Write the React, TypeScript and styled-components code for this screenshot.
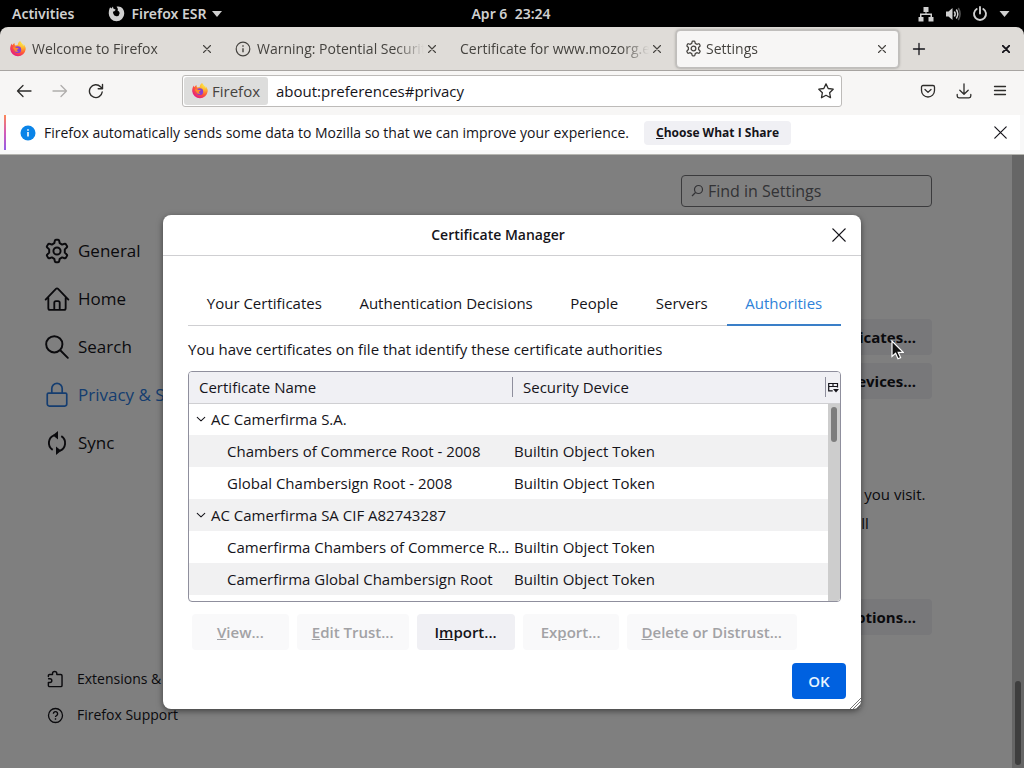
import React from "react";
import styled, { createGlobalStyle, css } from "styled-components";

const GlobalStyle = createGlobalStyle`
  *, *::before, *::after { box-sizing: border-box; }
  body { margin: 0; background: #ffffff; }
  body, button, input { font-family: "Open Sans", "Noto Sans", sans-serif; }
  button { border: 0; padding: 0; background: none; color: inherit; font-size: 15px; line-height: 20px; }
  svg { display: block; flex: none; }
`;

const Screen = styled.div`
  display: flex;
  flex-direction: column;
  height: 100vh;
  background: #000000;
  color: #15141a;
  font-size: 15px;
  line-height: 20px;
  overflow: hidden;
`;

/* Desktop top bar */
const TopBar = styled.header`
  display: grid;
  grid-template-columns: 1fr auto 1fr;
  align-items: center;
  height: 27px;
  flex: none;
  padding: 0 14px 0 12px;
  color: #d0d0d0;
  font-family: "Noto Sans", sans-serif;
  font-size: 14px;
  font-weight: 600;
`;
const TopGroup = styled.div<{ $end?: boolean }>`
  display: flex;
  align-items: center;
  gap: ${(p) => (p.$end ? 11 : 34)}px;
  justify-content: ${(p) => (p.$end ? "flex-end" : "flex-start")};
`;
const TopButton = styled.button`
  display: flex;
  align-items: center;
  gap: 6px;
  font-family: inherit;
  font-size: 14px;
  font-weight: 600;
`;
const Clock = styled.time`
  white-space: pre;
`;

/* Browser tabs */
const TabStrip = styled.div`
  display: flex;
  align-items: center;
  height: 44px;
  flex: none;
  background: #dfdcd8;
  border-bottom: 1px solid #a8a5a2;
  border-radius: 8px 8px 0 0;
`;
const BrowserTab = styled.div<{ $active?: boolean }>`
  display: flex;
  align-items: center;
  gap: 6px;
  flex: 0 1 225px;
  min-width: 0;
  height: 38px;
  padding: 0 10px;
  color: #45433f;
  font-size: 14px;
  ${(p) =>
    p.$active &&
    css`
      flex-basis: 223px;
      gap: 4px;
      margin-left: 1px;
      padding: 0 8px;
      background: #f7f6f5;
      border: 1px solid #c0bebc;
      border-radius: 4px;
      box-shadow: 0 0 3px rgba(0, 0, 0, 0.35);
    `}
`;
const TabLabel = styled.span`
  flex: 1;
  min-width: 0;
  overflow: hidden;
  white-space: nowrap;
  mask-image: linear-gradient(to left, transparent, #000 28px);
`;
const IconButton = styled.button<{ $w?: number }>`
  display: flex;
  align-items: center;
  justify-content: center;
  width: ${(p) => p.$w ?? 36}px;
  height: 32px;
  flex: none;
  &:disabled { color: #b0aeac; }
`;
const TabClose = styled(IconButton)`
  margin-left: -6px;
`;
const Spacer = styled.div`
  flex: 1;
`;

/* Navigation toolbar */
const Toolbar = styled.div`
  display: grid;
  grid-template-columns: 176px 1fr 176px;
  align-items: center;
  height: 44px;
  padding: 0 6px 4px;
  flex: none;
  background: #f7f6f5;
  color: #2e2d2b;
`;
const ToolGroup = styled.div<{ $end?: boolean }>`
  display: flex;
  justify-content: ${(p) => (p.$end ? "flex-end" : "flex-start")};
`;
const UrlBar = styled.div`
  display: flex;
  align-items: center;
  height: 32px;
  padding: 0 0 0 1px;
  background: #ffffff;
  border: 1px solid #bdbbb9;
  border-radius: 3px;
`;
const Identity = styled.button`
  display: flex;
  align-items: center;
  gap: 4px;
  height: 28px;
  padding: 0 8px;
  flex: none;
  background: #dddddc;
  border-radius: 3px;
  color: #45433f;
`;
const UrlInput = styled.input`
  flex: 1;
  min-width: 0;
  border: 0;
  padding: 0 8px;
  background: transparent;
  color: #15141a;
  font-size: 15px;
  outline: 0;
`;

/* Data notice under the toolbar */
const NoticeWrap = styled.div`
  height: 40px;
  padding: 0 4px 4px;
  flex: none;
  background: #f8f8f8;
  border-bottom: 1px solid #b5b5b0;
`;
const Notice = styled.div`
  display: flex;
  align-items: center;
  height: 35px;
  background: #ffffff;
  border-left: 2px solid;
  border-image: linear-gradient(#ff8a50, #d35bb8, #8f5ce8) 1;
  padding: 0 2px 0 14px;
  font-size: 14px;
  white-space: nowrap;
`;
const NoticeText = styled.span`
  margin: 0 15px 0 8px;
`;
const NoticeButton = styled.button`
  height: 24px;
  padding: 0 12px;
  border-radius: 4px;
  background: #f0f0f4;
  font-size: 12px;
  font-weight: 700;
`;

/* Settings page */
const Page = styled.div`
  position: relative;
  flex: 1;
  min-height: 0;
  display: flex;
  background: #ffffff;
`;
const Sidebar = styled.nav`
  display: flex;
  flex-direction: column;
  width: 240px;
  flex: none;
  padding: 72px 0 35px 44px;
`;
const NavLink = styled.a<{ $active?: boolean }>`
  display: flex;
  align-items: center;
  gap: 8px;
  height: 48px;
  color: ${(p) => (p.$active ? "#2a7be0" : "#15141a")};
  font-size: 17px;
  line-height: 24px;
  text-decoration: none;
  white-space: nowrap;
`;
const FootLink = styled(NavLink)`
  gap: 12px;
  height: 36px;
  padding-left: 2px;
  font-size: 14px;
`;
const Main = styled.main`
  display: flex;
  flex-direction: column;
  align-items: flex-end;
  flex: 1;
  min-width: 0;
  padding: 20px 80px 0 33px;
`;
const SearchField = styled.label`
  display: flex;
  align-items: center;
  gap: 4px;
  width: 251px;
  height: 32px;
  padding: 0 8px;
  border: 1px solid #76767a;
  border-radius: 4px;
  color: #66666c;
`;
const SearchInput = styled.input`
  flex: 1;
  min-width: 0;
  border: 0;
  padding: 0;
  background: transparent;
  font-size: 16px;
  outline: 0;
  &::placeholder { color: #66666c; opacity: 1; }
`;
const DeviceButtons = styled.div`
  display: flex;
  flex-direction: column;
  gap: 8px;
  margin-top: 112px;
`;
const PageButton = styled.button`
  height: 36px;
  min-width: 160px;
  padding: 0 16px;
  border-radius: 4px;
  background: #f0f0f4;
  font-weight: 700;
  text-align: right;
`;
const HttpsText = styled.p`
  margin: 81px 4px 0 0;
  width: 638px;
  line-height: 29px;
`;
const ExceptionsRow = styled.div`
  margin-top: 32px;
`;
const PageScroll = styled.div`
  display: flex;
  align-items: flex-end;
  justify-content: center;
  width: 12px;
  flex: none;
  padding-bottom: 3px;
  background: #cccccc;
`;
const PageThumb = styled.div`
  width: 6px;
  height: 84px;
  border-radius: 3px;
  background: #7c7c7c;
`;

/* Dialog */
const Overlay = styled.div`
  position: absolute;
  inset: 0;
  display: flex;
  align-items: center;
  justify-content: center;
  padding-top: 1px;
  background: rgba(0, 0, 0, 0.5);
`;
const Dialog = styled.section`
  position: relative;
  width: 698px;
  max-width: 100%;
  background: #ffffff;
  border-radius: 8px;
  box-shadow: 0 2px 6px rgba(0, 0, 0, 0.5);
`;
const DialogHead = styled.header`
  display: grid;
  grid-template-columns: 1fr 36px;
  align-items: center;
  height: 41px;
  padding: 0 4px 0 12px;
  border-bottom: 1px solid #cfcfd2;
`;
const DialogTitle = styled.h1`
  margin: 0;
  font-size: 14px;
  line-height: 20px;
  font-weight: 600;
  text-align: center;
`;
const DialogBody = styled.div`
  padding: 26px 20px 0 25px;
`;
const CertTabs = styled.div`
  display: flex;
  border-bottom: 1px solid #cfcfd2;
`;
const CertTab = styled.button<{ $active?: boolean }>`
  flex: 1 1 auto;
  height: 44px;
  margin-bottom: -1px;
  padding: 0 17px;
  border-bottom: 2px solid ${(p) => (p.$active ? "#3a7fc8" : "transparent")};
  color: ${(p) => (p.$active ? "#2f82d8" : "#15141a")};
  white-space: nowrap;
`;
const Intro = styled.p`
  margin: 13px 0 12px;
`;
const TableFrame = styled.div`
  border: 1px solid #8f8f9d;
  border-radius: 4px;
  overflow: hidden;
`;
const CertArea = styled.div`
  width: 653px;
  max-width: 100%;
`;
const Table = styled.table`
  width: 100%;
  table-layout: fixed;
  border-collapse: collapse;
`;
const Head = styled.th<{ $w?: number }>`
  width: ${(p) => (p.$w ? `${p.$w}px` : "auto")};
  height: 31px;
  padding: 0;
  background: #f0f0f4;
  border-bottom: 1px solid #cfcfd2;
  font-weight: 400;
  text-align: left;
`;
const HeadLabel = styled.div<{ $divided?: boolean }>`
  height: 20px;
  margin-right: ${(p) => (p.$divided ? 2 : 0)}px;
  padding-left: 10px;
  border: solid #8f8f9d;
  border-width: ${(p) => (p.$divided ? "0 1px" : "0")};
`;
const PickerButton = styled.button`
  display: flex;
  align-items: center;
  height: 20px;
`;
const Row = styled.tr<{ $shade?: boolean }>`
  height: 32px;
  background: ${(p) => (p.$shade ? "#f1f1f2" : "#ffffff")};
`;
const Filler = styled.tr`
  height: 6px;
`;
const Cell = styled.td<{ $left: number }>`
  padding: 0 0 0 ${(p) => p.$left}px;
  overflow: hidden;
  white-space: nowrap;
  text-overflow: ellipsis;
`;
const Group = styled.div`
  display: flex;
  align-items: center;
  gap: 5px;
`;
const TrackCell = styled.td`
  padding: 3px 3px 0;
  vertical-align: top;
  background: #cdcdcd;
`;
const Thumb = styled.div`
  width: 6px;
  height: 35px;
  border-radius: 3px;
  background: #7d7d7d;
`;
const Actions = styled.div`
  display: flex;
  gap: 8px;
  padding: 12px 4px 0;
`;
const Action = styled.button<{ $pad?: number }>`
  height: 36px;
  padding: 0 ${(p) => p.$pad ?? 15}px;
  border-radius: 4px;
  background: #f0f0f4;
  color: #15141a;
  font-weight: 600;
  white-space: nowrap;
  &:disabled { background: #f9f9fa; color: #a2a2a5; }
`;
const DialogFoot = styled.footer`
  display: flex;
  justify-content: flex-end;
  padding: 13px 15px 10px;
`;
const OkButton = styled.button`
  width: 54px;
  height: 36px;
  border-radius: 4px;
  background: #0061e0;
  color: #e8f4ff;
  font-weight: 600;
`;
const Grip = styled.div`
  position: absolute;
  right: 0;
  bottom: 0;
`;
const Pointer = styled.div`
  position: absolute;
  left: 891px;
  top: 185px;
`;

const Stroke = ({ d, size = 16, w = 1.3, box = 16 }: { d: string; size?: number; w?: number; box?: number }) => (
  <svg width={size} height={size} viewBox={`0 0 ${box} ${box}`} fill="none" stroke="currentColor" strokeWidth={w} strokeLinecap="round" strokeLinejoin="round" aria-hidden="true">
    <path d={d} />
  </svg>
);

const CloseIcon = ({ size = 8, w = 1.2 }: { size?: number; w?: number }) => (
  <Stroke d="M1 1 L15 15 M15 1 L1 15" size={size} w={(w * 16) / size} />
);

const GearIcon = ({ size }: { size: number }) => (
  <svg width={size} height={size} viewBox="0 0 24 24" fill="none" stroke="currentColor" strokeWidth="1.8" strokeLinejoin="round" aria-hidden="true">
    <path d="M11 1.700h2a1 1 0 0 1 1 .8l.5 2.300 2.200 1.300 2.300-.8a1 1 0 0 1 1.200.4l1 1.800a1 1 0 0 1-.2 1.300L19.200 10.500v3l1.800 1.700a1 1 0 0 1 .2 1.300l-1 1.800a1 1 0 0 1-1.200.4l-2.300-.8-2.200 1.300-.5 2.300a1 1 0 0 1-1 .8h-2a1 1 0 0 1-1-.8l-.5-2.300-2.200-1.300-2.300.8a1 1 0 0 1-1.200-.4l-1-1.800a1 1 0 0 1 .2-1.300L4.800 13.500v-3L3 8.800a1 1 0 0 1-.2-1.300l1-1.800A1 1 0 0 1 5 5.300l2.300.8 2.200-1.300.5-2.300a1 1 0 0 1 1-.8z" />
    <circle cx="12" cy="12" r="3.300" />
  </svg>
);

const FirefoxIcon = () => (
  <svg width="16" height="16" viewBox="0 0 16 16" aria-hidden="true">
    <defs>
      <radialGradient id="flame" cx="0.8" cy="0.12" r="1">
        <stop offset="0" stopColor="#fff04a" />
        <stop offset="0.35" stopColor="#ffb02e" />
        <stop offset="0.65" stopColor="#ff5a36" />
        <stop offset="1" stopColor="#e31587" />
      </radialGradient>
    </defs>
    <path fill="url(#flame)" d="M15.1 5.4c-.4-.9-1.1-1.8-1.7-2.1.5.9.7 1.7.8 2.4C13.300 3.400 11.700 2.500 10.400.500 10.300.300 10.200.100 10.200 0 8.500 1 7.800 2.700 7.700 3.900c-1 0-1.600.3-2.300.7C4.700 4.300 4.500 3 4.500 2.100 3.500 2.700 2.800 3.500 2.300 4.200 1.900 3.900 2 2.800 2 2.600.9 3.400.100 6 .200 8.300a7.800 7.800 0 0 0 15.500 0c.1-1-.1-2.100-.6-2.900z" />
    <circle cx="7.8" cy="8.7" r="3.400" fill="#8a3fd0" />
    <path fill="#ff8a2b" d="M3 6.600c1.400-.8 2.900-.4 3.600.3.700 0 2 .1 2 .5-.1.700-1.200.9-1.700 1.400-.3.700.4 1.500 1.500 1.500-1.600 1.200-3.900.3-4.100-1.500C3.800 8 3 7.500 3 6.600z" />
  </svg>
);

const Key = ({ text }: { text: string }) => {
  const [before, key, after] = text.split("|");
  return (
    <>
      {before}
      <u>{key}</u>
      {after}
    </>
  );
};

const nav = [
  { label: "General", icon: <GearIcon size={26} /> },
  { label: "Home", icon: <Stroke box={24} size={26} w={1.7} d="M1.500 12.500 L11 2.600 a1.400 1.400 0 0 1 2 0 L22.500 12.500 M4 10.500V20.500a1.500 1.500 0 0 0 1.500 1.500h13a1.500 1.500 0 0 0 1.500-1.500V10.500M9.500 22v-6.500a1.500 1.500 0 0 1 1.500-1.500h2a1.500 1.500 0 0 1 1.500 1.500V22" /> },
  { label: "Search", icon: <Stroke box={24} size={26} w={1.8} d="M9.500 2a7.500 7.500 0 1 0 0 15a7.500 7.500 0 0 0 0-15zM15 15l7 7" /> },
  { label: "Privacy & Security", icon: <Stroke box={20} size={26} w={1.3} d="M3.500 8.500h13a1 1 0 0 1 1 1v7.500a1.500 1.500 0 0 1-1.500 1.500H4a1.500 1.500 0 0 1-1.500-1.500V9.500a1 1 0 0 1 1-1zM6 8.500V5a4 4 0 0 1 8 0v3.500" />, active: true },
  {
    label: "Sync",
    icon: (
      <svg width="26" height="26" viewBox="0 0 26 26" fill="none" stroke="currentColor" strokeWidth="1.9" aria-hidden="true">
        <path d="M10.500 5.200a8.200 8.200 0 0 0-1.800 14.700M15.500 20.800a8.200 8.200 0 0 0 1.800-14.700" />
        <path d="M14 1v8.500L8.800 5.200zM12 25v-8.500l5.200 4.300z" fill="currentColor" stroke="none" />
      </svg>
    ),
  },
];

const rows = [
  { name: "AC Camerfirma S.A.", group: true },
  { name: "Chambers of Commerce Root - 2008" },
  { name: "Global Chambersign Root - 2008" },
  { name: "AC Camerfirma SA CIF A82743287", group: true },
  { name: "Camerfirma Chambers of Commerce Root" },
  { name: "Camerfirma Global Chambersign Root" },
];

const certTabs = ["Your Certificates", "Authentication Decisions", "People", "Servers", "Authorities"];

const actions = [
  { text: "|V|iew...", pad: 25 },
  { text: "|E|dit Trust..." },
  { text: "I|m|port...", enabled: true, pad: 18 },
  { text: "Ex|p|ort...", pad: 18 },
  { text: "|D|elete or Distrust..." },
];

const ShellBar = () => (
  <TopBar>
    <TopGroup>
      <TopButton>Activities</TopButton>
      <TopButton>
        <svg width="17" height="17" viewBox="0 0 16 16" aria-hidden="true">
          <path fill="#d0d0d0" d="M2 2.200 3.200 3.300 4.700 1.300 5 3.400 7.300 4.400 6 5.800 4.600 6.300 5 8.300A3 3 0 0 0 10.900 8C10.900 6.400 10 5.600 9 5.200 9.600 4.200 9.300 2.800 8 1.600 12.500.500 15.300 4 15.300 8A7.300 7.300 0 0 1 .7 8C.700 5.800 1.200 3.600 2 2.200z" />
        </svg>
        Firefox ESR
        <svg width="10" height="6" viewBox="0 0 10 6" aria-hidden="true"><path d="M0 0h10L5 6z" fill="currentColor" /></svg>
      </TopButton>
    </TopGroup>
    <Clock>Apr 6  23:24</Clock>
    <TopGroup $end>
      <svg width="16" height="16" viewBox="0 0 16 16" fill="currentColor" aria-hidden="true">
        <path d="M5.500 1h5v5h-2v1.500H14V11h1.500v4.500h-5V11h2V9h-9v2h2v4.500h-5V11H2V7.500h5.500V6h-2z" />
      </svg>
      <svg width="16" height="16" viewBox="0 0 16 16" aria-hidden="true">
        <path fill="currentColor" d="M1 5.500h2.500L7.500 2v12l-4-3.500H1z" />
        <g fill="none" stroke="currentColor" strokeWidth="1.500"><path d="M9.300 5.500q1.800 2.500 0 5M11.300 3.500q3 4.500 0 9" /><path d="M13.300 2q3.600 6 0 12" opacity=".4" /></g>
      </svg>
      <svg width="16" height="16" viewBox="0 0 16 16" fill="none" stroke="currentColor" strokeWidth="1.9" strokeLinecap="round" aria-hidden="true">
        <path d="M8 1v6.500M4.700 3a6 6 0 1 0 6.600 0" />
      </svg>
      <svg width="11" height="6" viewBox="0 0 10 6" aria-hidden="true"><path d="M0 0h10L5 6z" fill="currentColor" /></svg>
    </TopGroup>
  </TopBar>
);

const Tab = ({ icon, label, active }: { icon?: React.ReactNode; label: string; active?: boolean }) => (
  <BrowserTab $active={active}>
    {icon}
    <TabLabel>{label}</TabLabel>
    <TabClose $w={16} aria-label={`Close ${label}`}><CloseIcon w={1.1} /></TabClose>
  </BrowserTab>
);

const CertificateTable = () => (
  <TableFrame>
    <Table>
      <thead>
        <tr>
          <Head $w={323}><HeadLabel>Certificate Name</HeadLabel></Head>
          <Head><HeadLabel $divided>Security Device</HeadLabel></Head>
          <Head $w={12}>
            <PickerButton aria-label="Choose columns">
              <svg width="11" height="11" viewBox="0 0 11 11" fill="none" stroke="currentColor" strokeWidth="1.2" aria-hidden="true">
                <path d="M9.500 5.500V1.500H.7v7.300h4M.7 4.500h8.800M5 1.500v3" /><path d="M5 7h6L8 10.500z" fill="currentColor" stroke="none" />
              </svg>
            </PickerButton>
          </Head>
        </tr>
      </thead>
      <tbody>
        {rows.map((r, i) => (
          <Row key={r.name} $shade={i % 2 === 1}>
            {r.group ? (
              <Cell $left={7}>
                <Group><Stroke d="M2 5.500 8 11 14 5.500" size={10} w={1.7} />{r.name}</Group>
              </Cell>
            ) : (
              <Cell $left={38}>{r.name}</Cell>
            )}
            <Cell $left={2}>{r.group ? "" : "Builtin Object Token"}</Cell>
            {i === 0 && <TrackCell rowSpan={7}><Thumb /></TrackCell>}
          </Row>
        ))}
        <Filler><td colSpan={2} /></Filler>
      </tbody>
    </Table>
  </TableFrame>
);

export default function App() {
  return (
    <>
      <GlobalStyle />
      <Screen>
        <ShellBar />
        <TabStrip>
          <Tab icon={<FirefoxIcon />} label="Welcome to Firefox" />
          <Tab
            icon={
              <svg width="16" height="16" viewBox="0 0 16 16" fill="none" stroke="currentColor" aria-hidden="true">
                <circle cx="8" cy="8" r="6.800" strokeWidth="1.200" /><path d="M8 7.200v4M8 4.300v1.400" strokeWidth="1.400" />
              </svg>
            }
            label="Warning: Potential Security Risk"
          />
          <Tab label="Certificate for www.mozorg.example" />
          <Tab active icon={<GearIcon size={17} />} label="Settings" />
          <IconButton $w={40} aria-label="New tab"><Stroke d="M8 2.500v11M2.500 8h11" w={1.3} /></IconButton>
          <Spacer />
          <IconButton aria-label="Close window"><CloseIcon w={1.9} /></IconButton>
        </TabStrip>
        <Toolbar>
          <ToolGroup>
            <IconButton aria-label="Back"><Stroke d="M15 8H1.500M7 2.500 1.500 8 7 13.500" /></IconButton>
            <IconButton aria-label="Forward" disabled><Stroke d="M1 8h13.500M9 2.500 14.500 8 9 13.500" /></IconButton>
            <IconButton aria-label="Reload"><Stroke d="M14.200 9A6.400 6.400 0 1 1 12.500 3.800L14.500 5.800M14.500 1.500v4.300h-4.300" w={1.4} /></IconButton>
          </ToolGroup>
          <UrlBar>
            <Identity><FirefoxIcon />Firefox</Identity>
            <UrlInput aria-label="Address" defaultValue="about:preferences#privacy" />
            <IconButton $w={30} aria-label="Bookmark this page"><Stroke d="M8 .9l2.200 4.600 5 .7-3.600 3.500.9 5L8 12.300l-4.500 2.400.9-5L.8 6.200l5-.7z" /></IconButton>
          </UrlBar>
          <ToolGroup $end>
            <IconButton aria-label="Save to Pocket"><Stroke d="M3 2.500h10A1.500 1.500 0 0 1 14.500 4V7.500a6.500 6.500 0 0 1-13 0V4A1.500 1.500 0 0 1 3 2.500zM5 6.500 8 9.400l3-2.900" /></IconButton>
            <IconButton aria-label="Downloads"><Stroke d="M8 .8v10.400M3.800 7.300 8 11.300l4.200-4M1.200 11.500V13a1.800 1.800 0 0 0 1.800 1.800h10a1.800 1.800 0 0 0 1.800-1.800v-1.500" /></IconButton>
            <IconButton aria-label="Menu"><Stroke d="M2.500 3.500h11M2.500 7.500h11M2.500 11.500h11" /></IconButton>
          </ToolGroup>
        </Toolbar>
        <NoticeWrap>
          <Notice>
            <svg width="16" height="16" viewBox="0 0 16 16" aria-hidden="true">
              <circle cx="8" cy="8" r="7.500" fill="#0a84e8" /><path d="M8 7v4.500M8 4.200v1.500" stroke="#fff" strokeWidth="1.600" />
            </svg>
            <NoticeText>Firefox automatically sends some data to Mozilla so that we can improve your experience.</NoticeText>
            <NoticeButton><Key text="|C|hoose What I Share" /></NoticeButton>
            <Spacer />
            <IconButton aria-label="Dismiss"><CloseIcon size={13} /></IconButton>
          </Notice>
        </NoticeWrap>
        <Page>
          <Sidebar>
            {nav.map((n) => (
              <NavLink key={n.label} href="#" $active={n.active}>{n.icon}{n.label}</NavLink>
            ))}
            <Spacer />
            <FootLink href="#">
              <Stroke size={19} d="M2 5.500V4.800a1 1 0 0 1 1-1h2.500V3a1.800 1.800 0 0 1 3.600 0v.8h3.400a1 1 0 0 1 1 1v8.200a1 1 0 0 1-1 1H3a1 1 0 0 1-1-1v-2.500h1.300a1.500 1.500 0 0 0 0-3.200H2.200" w={1.2} />
              Extensions &amp; Themes
            </FootLink>
            <FootLink href="#">
              <svg width="19" height="19" viewBox="0 0 19 19" fill="none" stroke="currentColor" aria-hidden="true">
                <circle cx="9.500" cy="9.500" r="7" strokeWidth="1.300" /><path d="M7.400 7.700a2.100 2.100 0 1 1 3.200 1.800q-1.100.7-1.100 1.600M9.500 12.300v1.400" strokeWidth="1.400" />
              </svg>
              Firefox Support
            </FootLink>
          </Sidebar>
          <Main>
            <SearchField>
              <svg width="14" height="14" viewBox="0 0 14 14" fill="none" stroke="currentColor" strokeWidth="1.2" aria-hidden="true"><circle cx="8.500" cy="5.500" r="4" /><path d="M5.500 8.500 2 12" /></svg>
              <SearchInput placeholder="Find in Settings" aria-label="Find in Settings" />
            </SearchField>
            <DeviceButtons>
              <PageButton>View Certificates...</PageButton>
              <PageButton>Security Devices...</PageButton>
            </DeviceButtons>
            <HttpsText>
              HTTPS provides a secure, encrypted connection between Firefox and the websites you visit. Most websites support HTTPS, and if HTTPS-Only Mode is enabled, then Firefox will upgrade all connections to HTTPS.
            </HttpsText>
            <ExceptionsRow><PageButton>Manage Exceptions...</PageButton></ExceptionsRow>
          </Main>
          <PageScroll><PageThumb /></PageScroll>
          <Overlay>
            <Dialog role="dialog" aria-labelledby="dialog-title">
              <DialogHead>
                <DialogTitle id="dialog-title">Certificate Manager</DialogTitle>
                <IconButton aria-label="Close dialog"><CloseIcon size={14} w={1.4} /></IconButton>
              </DialogHead>
              <DialogBody>
                <CertArea>
                  <CertTabs role="tablist">
                    {certTabs.map((t) => (
                      <CertTab key={t} role="tab" $active={t === "Authorities"} aria-selected={t === "Authorities"}>{t}</CertTab>
                    ))}
                  </CertTabs>
                  <Intro>You have certificates on file that identify these certificate authorities</Intro>
                  <CertificateTable />
                  <Actions>
                    {actions.map((a) => (
                      <Action key={a.text} disabled={!a.enabled} $pad={a.pad}><Key text={a.text} /></Action>
                    ))}
                  </Actions>
                </CertArea>
              </DialogBody>
              <DialogFoot><OkButton>OK</OkButton></DialogFoot>
              <Grip>
                <svg width="12" height="12" viewBox="0 0 12 12" stroke="#777" aria-hidden="true"><path d="M1 12 12 1M4 12l8-8M7 12l5-5M10 12l2-2" /></svg>
              </Grip>
            </Dialog>
          </Overlay>
          <Pointer>
            <svg width="13" height="20" viewBox="0 0 13 20" aria-hidden="true"><path d="M1 1v15.500l3.600-3.200 2.400 5.400 2.600-1.100-2.400-5.300h5z" fill="#111" stroke="#fff" strokeWidth="1.200" /></svg>
          </Pointer>
        </Page>
      </Screen>
    </>
  );
}
